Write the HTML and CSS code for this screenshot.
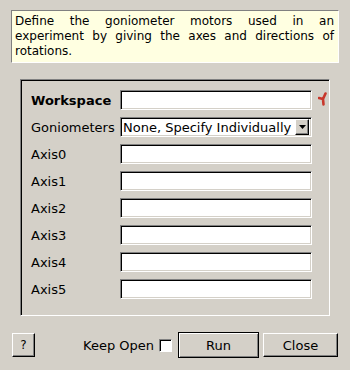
FILE: index.html
```html
<!DOCTYPE html>
<html>
<head>
<meta charset="utf-8">
<link rel="stylesheet" href="styles.css">
</head>
<body>
<div class="desc">Define the goniometer motors used in an experiment by giving the axes and directions of rotations.</div>
<div class="group">
  <div class="grid">
    <label class="lbl bold">Workspace</label>
    <div class="field"></div>
    <svg class="star" width="10" height="14" viewBox="0 0 10 14"><path d="M5 7 L7.5 1.5 M5 7 L1 6 M5 7 L5.5 12.5" stroke="#c8372b" stroke-width="2.6" fill="none" stroke-linecap="round"/></svg>

    <label class="lbl">Goniometers</label>
    <div class="field combo"><span class="ctext">None, Specify Individually</span><span class="arrow"><svg width="7" height="4" viewBox="0 0 7 4"><path d="M0 0 H7 L3.5 4 Z" fill="#000"/></svg></span></div>
    <span></span>

    <label class="lbl">Axis0</label><div class="field"></div><span></span>
    <label class="lbl">Axis1</label><div class="field"></div><span></span>
    <label class="lbl">Axis2</label><div class="field"></div><span></span>
    <label class="lbl">Axis3</label><div class="field"></div><span></span>
    <label class="lbl">Axis4</label><div class="field"></div><span></span>
    <label class="lbl">Axis5</label><div class="field"></div><span></span>
  </div>
</div>
<div class="bar">
  <div class="btn help">?</div>
  <div class="spacer"></div>
  <span class="keep">Keep Open</span>
  <span class="check"></span>
  <div class="btn run">Run</div>
  <div class="btn close">Close</div>
</div>
</body>
</html>
```
FILE: styles.css
```css
html, body {
  margin: 0;
  padding: 0;
}
body {
  width: 350px;
  height: 370px;
  background: #d4d0c8;
  font-family: "DejaVu Sans", sans-serif;
  font-size: 12px;
  color: #000;
  overflow: hidden;
}
.desc {
  margin: 10px 11px 0 11px;
  height: 45px;
  padding: 3px 4px 3px 3px;
  border: 1px solid;
  border-color: #808080 #fff #fff #808080;
  background: #ffffe1;
  line-height: 15px;
  text-align: justify;
}
.group {
  margin: 16px 20px 0 20px;
  height: 225px;
  border: 1px solid;
  border-color: #808080 #fff #fff #808080;
  box-shadow: inset 1px 1px 0 #000;
  padding: 10px 0 0 10px;
}
.grid {
  display: grid;
  grid-template-columns: 89px 192px 12px;
  grid-auto-rows: 20px;
  row-gap: 7px;
  align-items: center;
}
.lbl {
  font-size: 13px;
  white-space: nowrap;
}
.bold {
  font-weight: bold;
}
.field {
  height: 20px;
  box-sizing: border-box;
  background: #fff;
  border: 1px solid;
  border-color: #808080 #fff #fff #808080;
  box-shadow: inset 1px 1px 0 #000, inset -1px -1px 0 #d4d0c8;
}
.combo {
  display: flex;
  align-items: center;
  padding: 0 2px 0 2px;
  font-size: 13px;
}
.ctext {
  flex: 1;
  white-space: nowrap;
  overflow: hidden;
}
.arrow {
  width: 14px;
  height: 16px;
  box-sizing: border-box;
  background: #d4d0c8;
  border: 1px solid;
  border-color: #fff #000 #000 #fff;
  box-shadow: inset -1px -1px 0 #808080;
  display: flex;
  align-items: center;
  justify-content: center;
}
.star {
  margin-left: 6px;
  margin-top: -2px;
}
.bar {
  display: flex;
  align-items: center;
  margin-top: 16px;
  padding: 0 12px;
  height: 26px;
}
.spacer {
  flex: 1;
}
.btn {
  box-sizing: border-box;
  height: 24px;
  background: #d4d0c8;
  border: 1px solid;
  border-color: #fff #000 #000 #fff;
  box-shadow: inset -1px -1px 0 #808080;
  display: flex;
  align-items: center;
  justify-content: center;
  font-size: 13px;
}
.help {
  width: 23px;
  font-size: 12px;
}
.keep {
  font-size: 13px;
}
.check {
  width: 13px;
  height: 13px;
  box-sizing: border-box;
  margin-left: 5px;
  background: #fff;
  border: 1px solid;
  border-color: #808080 #fff #fff #808080;
  box-shadow: inset 1px 1px 0 #000;
}
.run {
  width: 81px;
  height: 26px;
  margin-left: 6px;
  border: 1px solid #000;
  box-shadow: inset 1px 1px 0 #fff, inset -1px -1px 0 #808080;
}
.close {
  width: 75px;
  margin-left: 4px;
}
```
